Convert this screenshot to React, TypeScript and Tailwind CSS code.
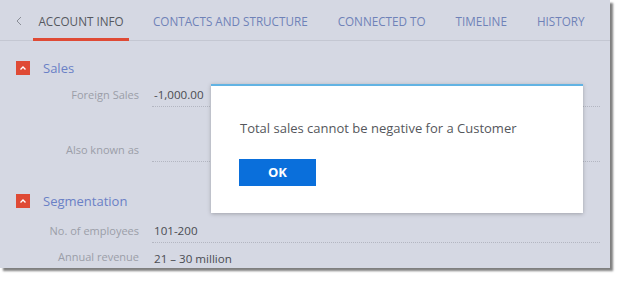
import React from "react";

const tabs = ["CONTACTS AND STRUCTURE", "CONNECTED TO", "TIMELINE", "HISTORY"];

const font = { fontFamily: '"Open Sans", "Noto Sans", sans-serif' };

function CollapseIcon() {
  return (
    <span className="flex h-[14px] w-[14px] items-center justify-center bg-[#df4a35]">
      <svg width="8" height="6" viewBox="0 0 8 6" fill="none">
        <polyline points="1.5,4.5 4,2 6.5,4.5" stroke="#fff" strokeWidth="1.4" />
      </svg>
    </span>
  );
}

function SectionHeader({ title, className }: { title: string; className: string }) {
  return (
    <div className={`flex items-center gap-[13px] pl-[16px] ${className}`}>
      <CollapseIcon />
      <span className="text-[13px] leading-[14px] text-[#6a80c6]">{title}</span>
    </div>
  );
}

function Field({
  label,
  value,
  className,
  underline = true,
}: {
  label: string;
  value?: string;
  className: string;
  underline?: boolean;
}) {
  return (
    <div className={`flex ${className}`}>
      <div className="w-[139px] pb-[2px] text-right text-[11px] leading-[20px] text-[#9b9ea8]">
        {label}
      </div>
      <div
        className={`ml-[13px] w-[448px] pl-[2px] text-[11.6px] leading-[20px] text-[#4a4c52] ${
          underline ? "border-b border-dotted border-[#b3b6c1] pb-[1px]" : ""
        }`}
      >
        {value}
      </div>
    </div>
  );
}

export default function App() {
  return (
    <div className="h-[284px] w-[624px] bg-white" style={font}>
      <div className="relative h-[268px] w-[610px] bg-[#d5d8e3] shadow-[3px_3px_2px_rgba(0,0,0,0.5)]">
        <div className="flex h-[41px] items-stretch border-b border-[#c4c7d2]">
          <div className="flex w-[33px] items-center justify-center pl-[4px] pt-[2px]">
            <svg width="6" height="10" viewBox="0 0 6 10" fill="none">
              <polyline points="5,1 1,5 5,9" stroke="#8a8d96" strokeWidth="1" />
            </svg>
          </div>
          <div className="relative flex w-[96px] items-center justify-center pt-[9px] text-[11.7px] text-[#55585f]">
            <span className="pb-[6px]">ACCOUNT INFO</span>
            <span className="absolute bottom-[-1px] left-0 right-0 h-[3px] bg-[#df4a35]" />
          </div>
          <div className="flex gap-[30px] pl-[24px]">
            {tabs.map((t) => (
              <div key={t} className="flex items-center pb-[6px] pt-[9px] text-[11.7px] text-[#6f82b8]">
                {t}
              </div>
            ))}
          </div>
        </div>

        <SectionHeader title="Sales" className="h-[41px] pt-[13px]" />
        <Field label="Foreign Sales" value="-1,000.00" className="h-[27px] items-center" />
        <Field label="Also known as" className="h-[53px] items-end" />

        <SectionHeader title="Segmentation" className="h-[48px] pt-[29px]" />
        <Field label="No. of employees" value="101-200" className="h-[33px] items-end" />
        <Field label="Annual revenue" value="21 – 30 million" className="h-[26px] items-end" underline={false} />

        <div className="absolute left-[211px] top-[84px] h-[129px] w-[372px] border-t-2 border-[#62b3e3] bg-white shadow-[0_1px_4px_rgba(0,0,0,0.25)]">
          <p className="pl-[29px] pt-[32px] text-[13px] leading-[20px] text-[#55575c]">
            Total sales cannot be negative for a Customer
          </p>
          <button
            type="button"
            className="ml-[28px] mt-[21px] flex h-[27px] w-[77px] items-center justify-center bg-[#0a6fdb] text-[13px] font-bold text-white"
          >
            OK
          </button>
        </div>
      </div>
    </div>
  );
}
